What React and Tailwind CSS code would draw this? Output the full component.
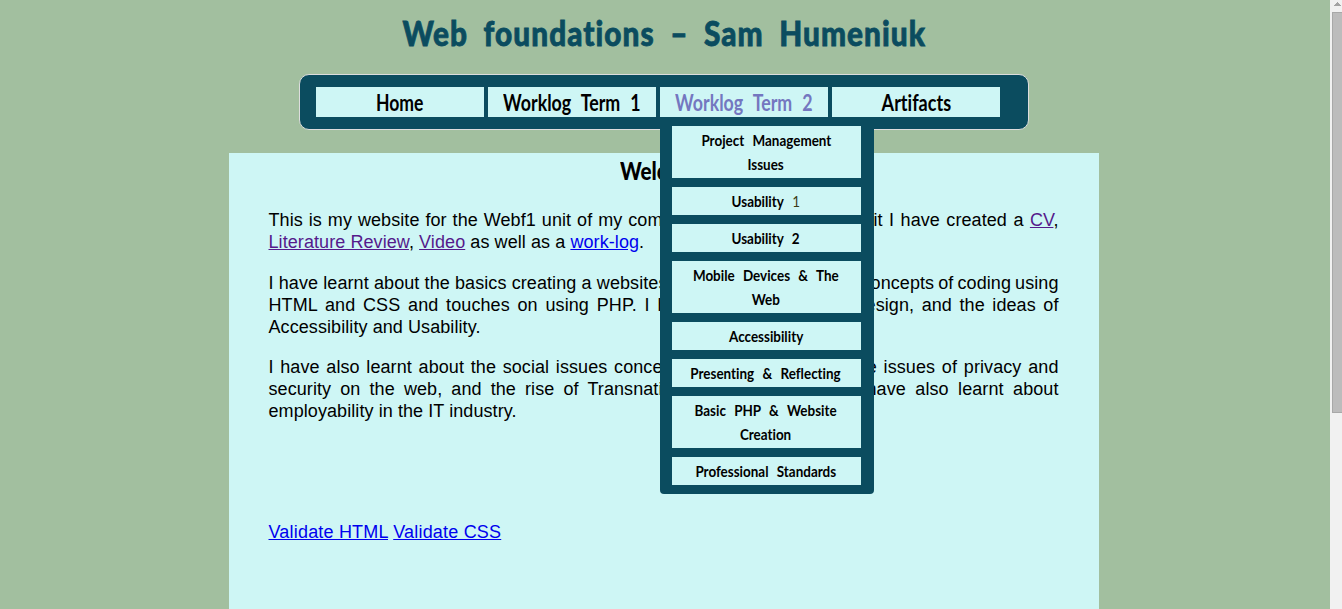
const navItems = [
  { label: "Home", scale: "scale-x-[0.8]" },
  { label: "Worklog Term 1", scale: "scale-x-[0.81]" },
  { label: "Worklog Term 2", scale: "scale-x-[0.81]", open: true },
  { label: "Artifacts", scale: "scale-x-[0.82]" },
];

const subItems = [
  { lines: ["Project Management", "Issues"] },
  { lines: ["Usability"], thin: "1" },
  { lines: ["Usability 2"] },
  { lines: ["Mobile Devices & The", "Web"] },
  { lines: ["Accessibility"] },
  { lines: ["Presenting & Reflecting"] },
  { lines: ["Basic PHP & Website", "Creation"] },
  { lines: ["Professional Standards"] },
];

function Submenu() {
  return (
    <ul className="absolute left-0 top-full z-10 flex w-[214px] flex-col gap-[9px] rounded-b bg-[#0b4c5f] py-[9px] pl-3 pr-[13px] text-[16px] leading-6 text-black">
      {subItems.map(({ lines, thin }, i) => (
        <li key={i} className="flex flex-col items-center bg-[#cef6f5] py-0.5 pr-px">
          {lines.map((line) => (
            <span key={line} className="inline-block scale-x-[0.84] whitespace-nowrap [word-spacing:6px]">
              {line}
              {thin && <span className="font-normal text-[#3c3c14]"> {thin}</span>}
            </span>
          ))}
        </li>
      ))}
    </ul>
  );
}

// A justified line whose middle lies beneath the open submenu.
function Line({ left, leftWidth, right, rightWidth }) {
  return (
    <span className="flex justify-between whitespace-nowrap">
      <span className={`block [text-align-last:justify] ${leftWidth}`}>{left}</span>
      <span className={`block [text-align-last:justify] [word-spacing:-1px] ${rightWidth}`}>{right}</span>
    </span>
  );
}

function Link({ children, visited }) {
  return (
    <a href="#" className={visited ? "text-[#551a8b] underline" : "text-[#0000ee] underline"}>
      {children}
    </a>
  );
}

function Scrollbar() {
  return (
    <div className="flex w-3 shrink-0 flex-col bg-[#f1f1f1]">
      <div className="flex h-3 items-start justify-end pt-0.5">
        <svg width="7" height="4" viewBox="0 0 7 4" className="mr-px" shapeRendering="crispEdges">
          <path d="M3 0h1v1h1v1h1v1h1v1H0V3h1V2h1V1h1z" fill="#a3a3a3" />
        </svg>
      </div>
      <div className="ml-0.5 h-[401px] border border-r-0 border-[#a8a8a8] bg-[#bcbcbc]" />
    </div>
  );
}

export default function App() {
  return (
    <div className="flex h-[609px] w-[1342px] overflow-hidden bg-[#a2bf9f] font-['Liberation_Sans',Arial,sans-serif] text-black">
      <div className="flex w-[1330px] flex-col items-center pr-0.5">
        <h1 className="flex h-[74px] items-start pt-3 font-['Lato',sans-serif] text-[34px] font-black leading-[42px] text-[#0b4c5f] [font-variant-ligatures:none] [-webkit-text-stroke:0.8px_#0b4c5f]">
          <span className="inline-block scale-x-[0.875] whitespace-nowrap tracking-[1.2px] [word-spacing:8.5px]">
            Web foundations – Sam Humeniuk
          </span>
        </h1>

        <nav className="h-14 w-[730px] shrink-0 rounded-[10px] border border-[#dddddd] bg-[#0b4c5f] pl-4 pt-3 font-['Lato',sans-serif] font-bold [font-variant-ligatures:none]">
          <ul className="flex gap-1 text-[22px] leading-[32px]">
            {navItems.map((item) => (
              <li
                key={item.label}
                className={
                  item.open
                    ? "relative flex h-[30px] w-[168px] justify-center bg-[#cef6f5] text-[#7477c0]"
                    : "relative flex h-[30px] w-[168px] justify-center bg-[#cef6f5]"
                }
              >
                <span className={`inline-block whitespace-nowrap [word-spacing:7px] ${item.scale}`}>{item.label}</span>
                {item.open && <Submenu />}
              </li>
            ))}
          </ul>
        </nav>

        <main className="mt-[23px] w-[870px] grow bg-[#cef6f5] pl-[39.5px] pr-[40.5px]">
          <h2 className="flex h-[56px] justify-center pt-[3px] font-['Lato',sans-serif] text-[24px] font-black leading-[30px]">
            <span className="w-[88px] origin-left scale-x-[0.86] whitespace-nowrap">Welcome</span>
          </h2>
          <div className="text-[18px] leading-[22px] tracking-[0.08px]">
            <p>
              <Line
                left="This is my website for the Webf1 unit of my com"
                leftWidth="w-[394px]"
                right={<>it I have created a <Link visited>CV</Link>,</>}
                rightWidth="w-[185px]"
              />
              <Link visited>Literature Review</Link>, <Link visited>Video</Link> as well as a <Link>work-log</Link>.
            </p>
            <p className="mt-[19px]">
              <Line
                left="I have learnt about the basics creating a websites"
                leftWidth="w-[399px] [word-spacing:-1px]"
                right="concepts of coding using"
                rightWidth="w-[197px]"
              />
              <Line
                left="HTML and CSS and touches on using PHP. I h"
                leftWidth="w-[399px]"
                right="design, and the ideas of"
                rightWidth="w-[203px]"
              />
              Accessibility and Usability.
            </p>
            <p className="mt-[18px]">
              <Line
                left="I have also learnt about the social issues conce"
                leftWidth="w-[394px]"
                right="the issues of privacy and"
                rightWidth="w-[207px]"
              />
              <Line
                left="security on the web, and the rise of Transnati"
                leftWidth="w-[394px]"
                right="have also learnt about"
                rightWidth="w-[192px]"
              />
              employability in the IT industry.
            </p>
            <p className="mt-[99px] tracking-[0.19px]">
              <Link>Validate HTML</Link> <Link>Validate CSS</Link>
            </p>
          </div>
        </main>
      </div>
      <Scrollbar />
    </div>
  );
}
